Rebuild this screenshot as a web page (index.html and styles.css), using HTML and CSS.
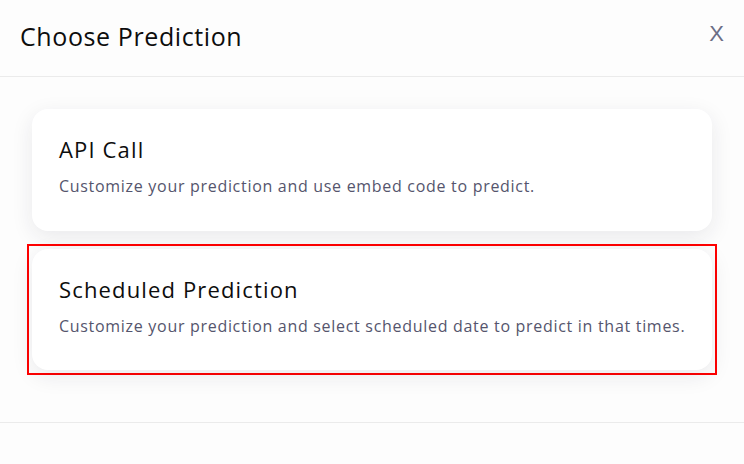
FILE: index.html
```html
<!DOCTYPE html>
<html>
<head>
<meta charset="utf-8">
<link rel="stylesheet" href="styles.css">
</head>
<body>
<div class="modal">
  <header class="modal-header">
    <h1 class="modal-title">Choose Prediction</h1>
    <span class="close">X</span>
  </header>
  <div class="modal-body">
    <div class="option">
      <h2 class="option-title">API Call</h2>
      <p class="option-desc">Customize your prediction and use embed code to predict.</p>
    </div>
    <div class="highlight">
      <div class="option">
        <h2 class="option-title">Scheduled Prediction</h2>
        <p class="option-desc">Customize your prediction and select scheduled date to predict in that times.</p>
      </div>
    </div>
  </div>
  <div class="modal-footer"></div>
</div>
</body>
</html>
```
FILE: styles.css
```css
html, body {
  margin: 0;
  padding: 0;
  background: #fdfdfd;
}
body {
  font-family: "Open Sans", "Liberation Sans", sans-serif;
  width: 744px;
  height: 464px;
  overflow: hidden;
}
.modal-header {
  height: 77px;
  border-bottom: 1px solid #ebebeb;
  display: flex;
  align-items: center;
  justify-content: space-between;
  padding: 0 20px 0 20px;
  box-sizing: border-box;
}
.modal-title {
  margin: -4px 0 0 0;
  font-size: 25px;
  font-weight: 500;
  color: #0d0d0d;
  letter-spacing: 0.6px;
}
.close {
  font-family: "Liberation Sans", sans-serif;
  font-size: 22px;
  color: #6b6e85;
  margin-top: -8px;
  margin-right: 0;
}
.modal-body {
  padding: 32px 32px 47px 32px;
  display: flex;
  flex-direction: column;
  gap: 13px;
  border-bottom: 1px solid #ebebeb;
}
.option {
  background: #fff;
  border-radius: 16px;
  box-shadow: 0 6px 22px rgba(30, 30, 60, 0.09);
  padding: 26px 20px 0 27px;
  height: 122px;
  box-sizing: border-box;
}
.highlight {
  border: 2px solid #ff0000;
  padding: 3px;
  margin: 0 -5px;
}
.highlight .option {
  height: 121px;
}
.option-title {
  margin: 0;
  font-size: 22px;
  font-weight: 500;
  color: #0d0d0d;
  line-height: 28px;
  letter-spacing: 1.15px;
}
.option-desc {
  margin: 13px 0 0 0;
  font-size: 16px;
  color: #55556d;
  line-height: 20px;
  letter-spacing: 0.7px;
  white-space: nowrap;
}
```
